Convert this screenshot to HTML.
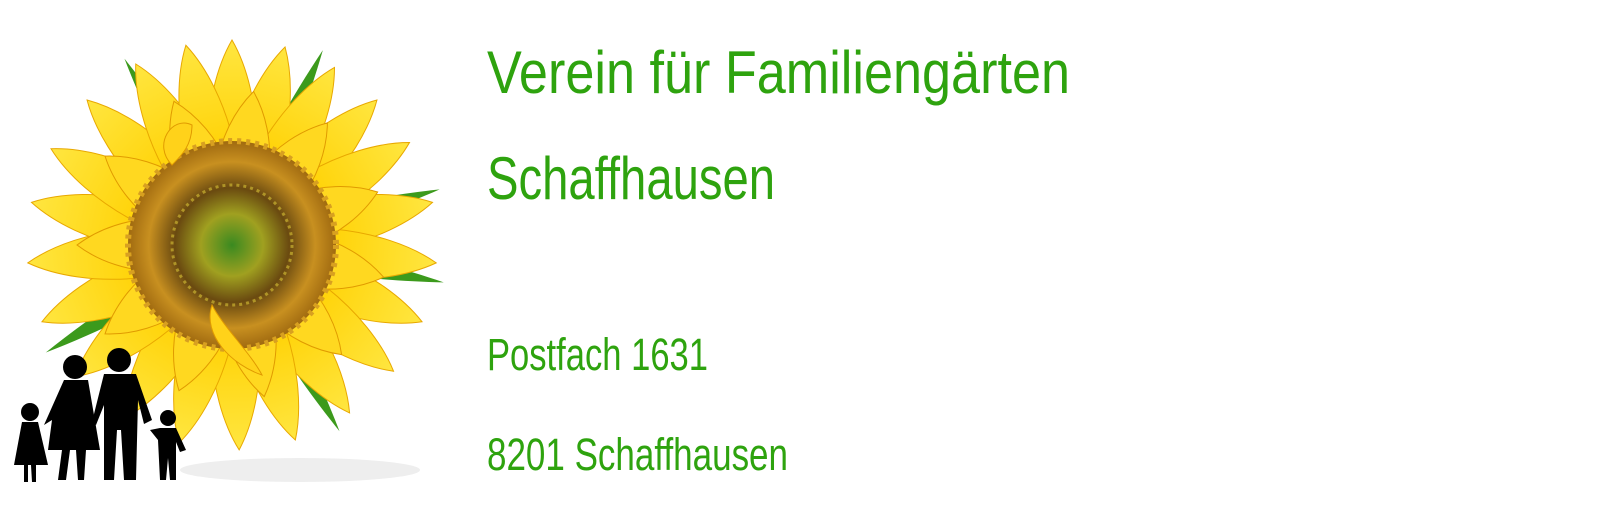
<!DOCTYPE html>
<html><head><meta charset="utf-8"><style>
html,body{margin:0;padding:0;background:#fff;width:1599px;height:512px;overflow:hidden}
svg{position:absolute;left:0;top:0}
</style></head><body>
<svg width="1599" height="512" viewBox="0 0 1599 512">
<defs>
<radialGradient id="disk" cx="0.5" cy="0.5" r="0.5">
<stop offset="0" stop-color="#3a8a20"/><stop offset="0.3" stop-color="#a0a020"/><stop offset="0.55" stop-color="#6a4a10"/><stop offset="0.8" stop-color="#c89020"/><stop offset="1" stop-color="#a06a10"/>
</radialGradient>
<linearGradient id="pet" x1="0" y1="0" x2="0" y2="1">
<stop offset="0" stop-color="#ffe640"/><stop offset="0.6" stop-color="#ffd000"/><stop offset="1" stop-color="#f0a800"/>
</linearGradient>
<path id="p" d="M0,0 C-34,-50 -32,-150 0,-205 C32,-150 34,-50 0,0Z" fill="url(#pet)" stroke="#e8a800" stroke-width="1"/>
<path id="q" d="M0,0 C-36,-40 -34,-110 0,-155 C34,-110 36,-40 0,0Z" fill="#ffd820" stroke="#e09a00" stroke-width="1"/>
<path id="l" d="M0,0 C-18,-60 -10,-150 0,-215 C10,-150 18,-60 0,0Z" fill="#3c9a1c"/>
</defs>
<ellipse cx="300" cy="470" rx="120" ry="12" fill="#eee"/>
<g transform="translate(232,245)">
<use href="#l" transform="rotate(-30)"/><use href="#l" transform="rotate(75)"/><use href="#l" transform="rotate(100)"/><use href="#l" transform="rotate(150)"/><use href="#l" transform="rotate(-120)"/><use href="#l" transform="rotate(25)"/>
<use href="#p" transform="rotate(0)"/><use href="#p" transform="rotate(15)"/><use href="#p" transform="rotate(30)"/><use href="#p" transform="rotate(45)"/><use href="#p" transform="rotate(60)"/><use href="#p" transform="rotate(78)"/><use href="#p" transform="rotate(95)"/><use href="#p" transform="rotate(112)"/><use href="#p" transform="rotate(128)"/><use href="#p" transform="rotate(145)"/><use href="#p" transform="rotate(162)"/><use href="#p" transform="rotate(178)"/><use href="#p" transform="rotate(195)"/><use href="#p" transform="rotate(212)"/><use href="#p" transform="rotate(230)"/><use href="#p" transform="rotate(248)"/><use href="#p" transform="rotate(265)"/><use href="#p" transform="rotate(282)"/><use href="#p" transform="rotate(298)"/><use href="#p" transform="rotate(315)"/><use href="#p" transform="rotate(332)"/><use href="#p" transform="rotate(347)"/>
<use href="#q" transform="rotate(8)"/><use href="#q" transform="rotate(38)"/><use href="#q" transform="rotate(70)"/><use href="#q" transform="rotate(102)"/><use href="#q" transform="rotate(135)"/><use href="#q" transform="rotate(168)"/><use href="#q" transform="rotate(200)"/><use href="#q" transform="rotate(235)"/><use href="#q" transform="rotate(270)"/><use href="#q" transform="rotate(305)"/><use href="#q" transform="rotate(338)"/>
<circle r="104" fill="url(#disk)"/>
<circle r="104" fill="none" stroke="#d8a020" stroke-width="6" stroke-dasharray="4 5"/>
<circle r="60" fill="none" stroke="#c8b030" stroke-width="3" stroke-dasharray="3 4" opacity="0.7"/>
<path d="M-20,60 C-10,80 20,110 30,130 C0,120 -30,90 -20,60Z" fill="#ffd21a" stroke="#e09a00"/>
<path d="M-60,-80 C-80,-100 -60,-130 -40,-120 C-40,-100 -50,-90 -60,-80Z" fill="#ffd21a" stroke="#e09a00"/>
</g>
<g fill="#000">
<circle cx="30" cy="412" r="9"/><path d="M22,422 L38,422 L48,465 L36,465 L36,482 L32,482 L31,465 L28,465 L28,482 L24,482 L24,465 L14,465Z"/>
<circle cx="75" cy="367" r="12"/><path d="M64,380 L88,380 L100,450 L86,450 L84,480 L78,480 L76,450 L70,450 L66,480 L58,480 L62,450 L48,450 L52,420 L44,425Z"/>
<circle cx="119" cy="360" r="12"/><path d="M104,374 L136,374 L152,420 L144,424 L138,400 L136,480 L124,480 L121,430 L117,430 L114,480 L104,480 L104,405 L96,425 L92,422Z"/>
<circle cx="168" cy="418" r="8"/><path d="M160,428 L176,428 L186,450 L180,452 L176,442 L176,480 L170,480 L168,458 L166,480 L160,480 L158,440 L150,430Z"/>
</g>
<g fill="#2ea30e" font-family="'Liberation Sans',sans-serif">
<text x="487" y="93" font-size="60" textLength="583" lengthAdjust="spacingAndGlyphs">Verein für Familiengärten</text>
<text x="487" y="199" font-size="60" textLength="288" lengthAdjust="spacingAndGlyphs">Schaffhausen</text>
<text x="487" y="370" font-size="45" textLength="221" lengthAdjust="spacingAndGlyphs">Postfach 1631</text>
<text x="487" y="470" font-size="45" textLength="301" lengthAdjust="spacingAndGlyphs">8201 Schaffhausen</text>
</g>
</svg>
</body></html>
